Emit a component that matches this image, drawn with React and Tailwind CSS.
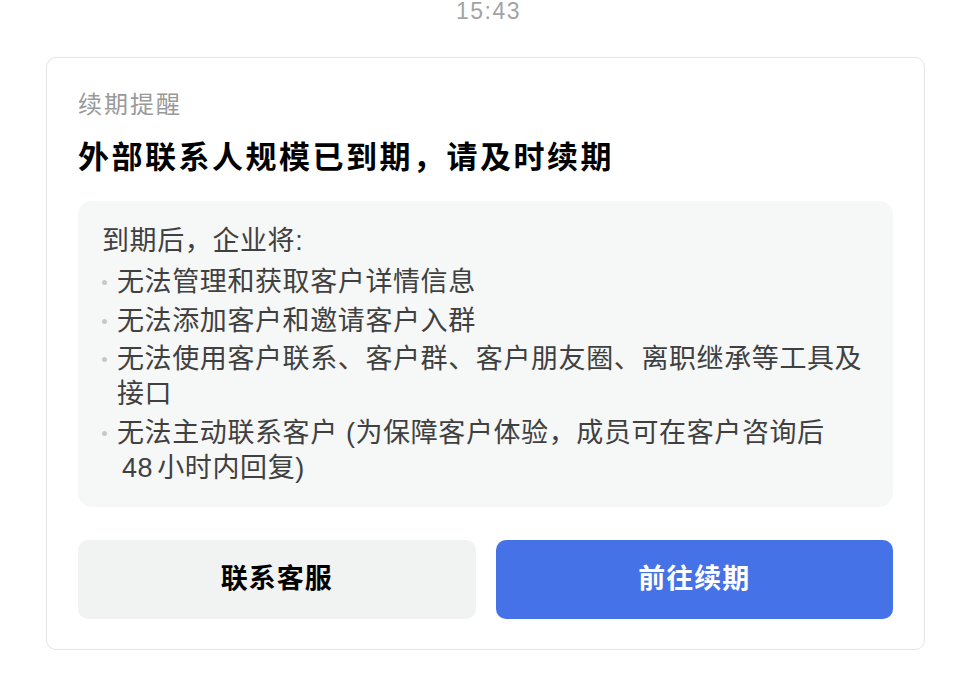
import React from 'react';

const items = [
  ['无法管理和获取客户详情信息'],
  ['无法添加客户和邀请客户入群'],
  ['无法使用客户联系、客户群、客户朋友圈、离职继承等工具及接口'],
  [
    '无法主动联系客户 (为保障客户体验，成员可在客户咨询后',
    <span key="n" className="whitespace-nowrap">
      <span className="ml-[5px] mr-[4px]">48</span>小时
    </span>,
    '内回复)',
  ],
];

export default function App() {
  return (
    <div
      className="w-[962px] h-[680px] bg-white overflow-hidden"
      style={{ fontFamily: '"Liberation Sans", "Noto Sans CJK SC", sans-serif' }}
    >
      {/* 时间 */}
      <div className="h-[22px] pl-[15px] text-center text-[23px] leading-[22px] tracking-[1.5px] text-[#a3a3a3]">
        15:43
      </div>

      {/* 续期提醒卡片 */}
      <div className="mt-[35px] ml-[46px] w-[879px] rounded-[10px] border-[1.5px] border-[#e4e4e4] px-[31px] pt-[32px] pb-[30px]">
        <p className="text-[24px] leading-[30px] tracking-[2px] text-[#999999]">续期提醒</p>
        <h1 className="mt-[20px] text-[31px] leading-[36px] tracking-[2.5px] font-bold text-black">
          外部联系人规模已到期，请及时续期
        </h1>

        <div className="mt-[25px] rounded-[14px] bg-[#f6f7f7] pl-[24px] pr-[24px] pt-[23px] pb-[21px] text-[27px] leading-[35px] tracking-[0.6px] text-[#404040]">
          <p className="mb-[6px]">到期后，企业将:</p>
          <ul className="flex flex-col gap-[3.5px]">
            {items.map((parts, i) => (
              <li key={i} className="flex">
                <span className="w-[15px] shrink-0 flex items-start pt-[15px]">
                  <span className="w-[5px] h-[5px] rounded-full bg-[#c8c8c8]" />
                </span>
                <span className="flex-1">{parts}</span>
              </li>
            ))}
          </ul>
        </div>

        <div className="mt-[33px] grid grid-cols-2 gap-[20px]">
          <button className="h-[79px] rounded-[10px] bg-[#f1f2f2] text-[27px] font-bold tracking-[1px] text-black">
            联系客服
          </button>
          <button className="h-[79px] rounded-[10px] bg-[#4672e7] text-[27px] font-bold tracking-[1px] text-white">
            前往续期
          </button>
        </div>
      </div>
    </div>
  );
}
